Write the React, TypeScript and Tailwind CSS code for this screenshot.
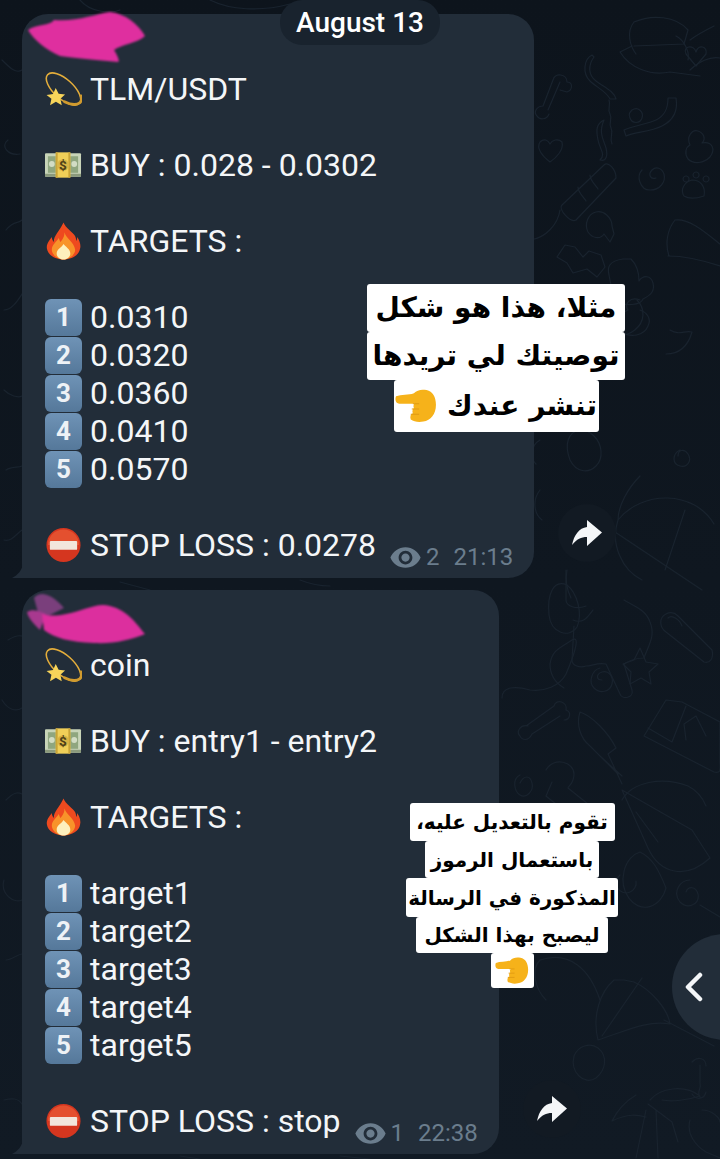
import { MdVisibility } from "react-icons/md";

const doodles = [
  // top right
  "M634 22c18-8 42-6 54 8 M634 22c-8 10-4 24 2 32 M688 30l-4 14-50 2 M620 52c10 16 30 24 50 20l30 4 M620 52l12-6",
  "M676 36c8 4 14 16 12 24 M690 40c8-6 16-10 24-14 M690 70c8-8 20-14 30-12",
  "M686 54c-4-8 8-10 10-2 2-8 12-6 10 2l-10 12z",
  "M594 57c-6 8-6 18 2 24 8 6 18 10 20 18h-6c-4-8-14-12-20-18-8-8-6-22 2-26z",
  "M609 100c2 6-2 8 1 14s-2 8 1 14-2 8 1 16",
  "M676 98c2 12-2 22-14 28-12 6-28 6-36 10l-2-6c8-4 24-6 32-10 8-4 12-10 12-22z",
  "M553 80l-10 26 M560 82l-12 28 M553 80c2-8 14-6 14 2 6 0 6 8 0 10l-7-2 M543 106c-6 0-10 6-6 10 2 4 10 4 12-2",
  "M550 162c-8-6-14-14-10-20 4-4 8-2 10 2 2-4 8-6 12-2 2 8-6 16-12 20z",
  "M604 165l-42 40 M616 178l-40 42 M604 165c4-4 12 4 12 13 M562 205c-4 4 8 18 14 15 M590 175c0 6 6 10 8 14 M578 187c0 6 6 10 8 14",
  "M560 210c-2 14-14 28-30 30",
  "M604 120c-8 4-8 10-6 20 2 10 8 14 2 20 6 2 8-4 6-12-2-8-8-14-2-28z",
  "M632 110c6-4 12 2 10 8s-10 6-12 0c-2-4 0-6 2-8z",
  "M642 170c-6 6-2 20 8 20s16-8 14-16c-2-6-8-8-12-4s-2 10 4 8",
  "M690 145c-4-8 2-16 8-14s8 8 4 12c10-2 14 6 8 14-6 6-16 8-22 2-4-6-2-12 2-14z",
  "M692 180c-8 2-12 10-8 16 6 4 14 2 20 0 2-10-4-16-12-16z M686 176a3 3 0 1 0 .1 0 M696 172a3 3 0 1 0 .1 0 M706 176a3 3 0 1 0 .1 0",
  "M596 212c-8 2-12 12-8 20 4 6 12 8 16 2l6 8 4-8-2-8c0-8-8-16-16-14z",
  "M675 220c-8 10-10 24-6 36 M675 220c14-2 30 12 45 24 M668 256c18 0 34 4 52 10",
  "M565 245l-8 12 10 6 6 10 14-4 10 8 8-10-4-12-12-4-6 6-8-10z",
  "M623 259c-14 2-16 8-14 16 2 14 6 20 6 26 10 6 26 4 28-2 8-4 12-8 10-16-2-8-10-8-14-2 0-10-2-16-8-22z",
  // right middle
  "M640 300c-10-4-16 4-12 10-10 4-12 14-6 22 8 6 22 4 26-6 4-8-2-14-8-16 M670 330c10 6 14 0 22 2-4 14-12 22-26 22",
  "M597 300a26 22 0 1 0 40 0",
  "M580 430c-12 2-16 14-10 30 6 12 18 14 26 6 8-8 6-22-2-30-4-4-10-6-14-6z",
  "M680 450c-8 4-8 14 0 16s12-6 8-12-10-4-10 2",
  "M618 520c24-30 76-30 96 4 M618 520c-8 24 4 50 24 60 M640 476c-12 12-22 30-22 44 M685 510l-20 60 M612 530l90 60",
  "M540 440c-10 6-10 18-4 24 M540 490c-8 10-6 24 2 30",
  // right lower
  "M567 585c-14-6-20 10-18 30 2 18 20 24 28 12 6-14 0-34-10-42z",
  "M567 570c-2 10 0 20 4 28 M573 620c10 4 14-2 20-10",
  "M566 570v30c0 6 10 10 20 6 M574 626l-2 34c0 6 8 8 14 6 6 0 12-4 20-2 M606 664l14 30c2 6 14 4 12-4l-8-26c6-4 12-6 20-6 4-12 12-22 6-36-4-12-16-16-26-22",
  "M666 614c-8 4-6 14 0 18l38 30c6 2 10-4 8-12l-34-34c-4-4-8-4-12-2z M668 618c4-4 12 2 14 8",
  "M640 648l-6 12-11 4 8 8-1 12 11-6 10 6-2-12 9-8-12-2z",
  "M572 640c10-6 0 20-6 34-6 12-22 18-36 16-14-4-28-4-28 8 M572 640c-12 8-20 10-22 24 0 10 4 18 14 24",
  "M600 668c-8 2-12 14-6 20s16 4 18-4-4-14-10-12-6 8 0 8",
  "M554 706l-28 20 M560 716l-28 18 M554 706c2-8 14-4 12 4 6 2 4 10-2 10 M528 726c-8-2-12 6-8 10 2 4 8 6 12-2",
  "M580 712c-4 12 0 26 10 34l28 28 M580 712c12 4 28 20 36 36 l-8 6 14 30 M600 756l22 20",
  "M666 700l-22 36 70 36c8 2 6-4 6-10v-40l-38-20z M648 728l24 14 14-36 M686 740l-2-16 12-8 10 20",
  "M520 775c-8 4-6 16 0 20s14-4 12-12-8-8-12 0",
  "M546 770c8-14 28-8 28 4 0 10-6 12-6 14l20 16 M552 782l-6 14 22 18",
  "M622 800c10-18 40-24 66-14 8 4 14 10 18 20",
  // pizza + lower right
  "M622 790l70 40 18 28c-24 22-50 16-62-10l-26-58z M636 812l22 30",
  "M640 852a22 28 0 1 0 26 36c-8-20-14-30-26-36z M620 875a10 10 0 1 0 16 6",
  "M690 880c-10 0-18 12-10 22 8 8 20 2 18-8-2-8-10-8-12-2 M700 905l20 12",
  "M560 880c-14 8-20 24-6 36 10 4 20 0 20-14 0-10-6-20-14-22z",
  "M540 960c30-10 50 10 60 40 M540 960c-10 10-4 30 6 40",
  "M614 980c-14 12-22 36-16 60 30-10 50-20 72-16 -2-14-18-34-36-42l-10-2z M602 1036l40-58 M664 1020l50 26",
  "M574 1056c4-10 16-14 24-8 10 8 8 22-2 30-12 8-26-6-22-22z",
  "M636 1095c-10 6-18 14-24 26 16-8 26-6 34-4 M650 1100c10-12 34-16 50-4-12 4-28 6-38 4 M646 1110l-10 48 M656 1110l2 48 M648 1104l24 18 6 20",
  "M700 1065v18c2 6-4 8 0 14 M692 1062c6-6 14-4 14 4 M692 1094c4 6 12 6 14-2",
  "M690 1120c-4 14 6 26 16 32l14 6 M702 1110c10 0 18 8 18 12",
  // left strip
  "M2 60c8 8 14 14 20 10 M8 140c-8 6 0 16 12 14 M6 230c8-10 12-6 16-10 M4 310c8 0 14-10 18-16 M4 390c6 6 14 8 18 6 M6 470c6-4 12-2 16-4 M4 540c8 2 12-6 18-10",
  "M8 640c10-6 12-4 14-4 M2 700c6 10 14 12 20 8 M6 800c8-8 12-8 16-6 M4 880c-4 14 10 24 18 20 M6 960c6 0 12-6 16-6 M4 1100c8-2 14-2 18 4",
  // bottom gap between bubbles
  "M120 582l30 8 M300 580c10 4 20 6 30 6 M180 1156l20 3 M340 1156l30 3 M80 0c10 12 30 14 40 10 M210 0c20 10 50 12 80 4",
];

const Scribble = ({ kind }: { kind: "a" | "b" }) => (
  <svg
    width="140"
    height="64"
    viewBox="0 0 140 64"
    className={`absolute left-[4px] blur-[1.2px] ${kind === "a" ? "top-[-2px]" : "top-0"}`}
  >
    {kind === "a" ? (
      <path
        d="M2 18C10 12 24 14 28 8 50 10 70 2 84 0 100 2 112 12 119 24 110 32 96 32 88 38 92 44 94 50 92 50 70 48 48 46 34 44 20 38 8 28 2 18Z"
        fill="#df2f9f"
      />
    ) : (
      <>
        <path d="M8 8C14 0 26 4 38 18L14 30Z" fill="#7a3f7c" />
        <path d="M1 22C8 18 14 22 20 24L14 40C8 34 2 28 1 22Z" fill="#a8398f" />
        <path d="M16 24C24 26 30 26 40 24 56 22 70 12 84 16 102 20 112 36 119 44 104 50 88 54 68 53 44 52 28 48 18 40Z" fill="#dc2f9e" />
      </>
    )}
  </svg>
);

const Dizzy = () => (
  <svg width="38" height="38" viewBox="0 0 38 38">
    <ellipse cx="19" cy="19" rx="22" ry="10" transform="rotate(42 19 19)" fill="none" stroke="#e3ad3b" strokeWidth="1.6" />
    <path d="M11 18l3 6 6.600 .6-4.800 4.400 1.400 6.600-6-3.400-6 3.400 1.400-6.600-5-3.800 6.700-1z" fill="#f7d45a" />
    <path d="M20 32c6 3 12 4 16 1 1-1 2-4 1-7" fill="none" stroke="#d09a2e" strokeWidth="2.8" strokeLinecap="round" />
  </svg>
);

const Money = () => (
  <svg width="38" height="38" viewBox="0 0 38 38">
    <rect x="0" y="7" width="37" height="24" rx="1" fill="#c8d4b8" />
    <rect x="0" y="28" width="37" height="3" fill="#8b9a7c" />
    <rect x="3" y="10" width="31" height="17" fill="#8fa67f" />
    <circle cx="7" cy="18" r="3" fill="#d2dcc4" />
    <circle cx="30" cy="18" r="3" fill="#d2dcc4" />
    <rect x="11" y="6" width="15" height="26" fill="#f0cf58" />
    <rect x="11" y="6" width="2" height="26" fill="#c9a437" />
    <rect x="24" y="6" width="2" height="26" fill="#c9a437" />
    <circle cx="18.500" cy="19" r="6" fill="#d8b445" />
    <text x="18.500" y="24" textAnchor="middle" fontSize="14" fontWeight="700" fill="#4d3f17" fontFamily="Roboto, sans-serif">$</text>
  </svg>
);

const Fire = () => (
  <svg width="38" height="38" viewBox="0 0 38 38">
    <path d="M19 0c2 6 10 10 12 14 1 2 1 4 1 5 1-1 1-3 1-4 3 4 4 9 3 12-1 6-8 11-17 11S3 33 2 27c-1-5 3-9 5-12 0 2 1 4 2 5 0-7 6-11 10-20z" fill="#ee4a1f" />
    <path d="M20 10c1 6 10 10 11 18 0 5-6 10-12 10S7 33 7 28c0-5 5-8 7-12 1 2 1 3 2 4 2-3 4-5 4-10z" fill="#f8932a" />
    <path d="M19 22c2 3 7 5 7 10 0 3-3 6-7 6s-7-3-7-6c0-5 5-6 7-10z" fill="#fdf0bd" />
  </svg>
);

const Keycap = ({ n }: { n: string }) => (
  <div className="w-[37px] h-[37px] rounded-[6px] bg-linear-to-b from-[#6f93b6] to-[#55789a] flex items-center justify-center text-[26px] font-bold text-[#eef2f6]">
    {n}
  </div>
);

const NoEntry = () => (
  <svg width="38" height="38" viewBox="0 0 38 38">
    <circle cx="19" cy="19" r="17.500" fill="#d5361f" />
    <path d="M3 19a16 16 0 0 1 32 0" fill="#e4502f" />
    <rect x="5" y="15" width="28" height="9" rx="1" fill="#f2e6dc" />
  </svg>
);

const Pointing = ({ size }: { size: number }) => (
  <svg width={size} height={size * 0.8} viewBox="0 0 40 32">
    <path d="M1 7C6 5 13 6 18 4c3-3 7-4 12-3 6 1 9 7 9 14 0 9-5 15-12 16-5 1-9 0-12-2-1-3 0-5 2-6-1-2 0-4 1-5-1-2 0-4 1-4H4C0 14 0 9 1 7z" fill="#f6b21a" />
    <path d="M15 24h8M16 19h7M17 14h6" stroke="#e09a12" strokeWidth="1" fill="none" />
  </svg>
);

const ShareButton = () => (
  <div className="self-end mb-[16px] ml-[24px] w-[58px] h-[58px] rounded-full bg-[#121a23] flex items-center justify-center">
    <svg width="30" height="26" viewBox="0 0 30 26">
      <path d="M30 12.500 15 0v7C7 8 2 15 0 25c5-6 9-8 15-8v9z" fill="#f4f6f8" />
    </svg>
  </div>
);

const Line = ({ icon, text }: { icon?: React.ReactNode; text?: string }) => (
  <div className="h-[38px] flex items-center gap-[8px]">
    {icon && <span className="w-[37px] flex justify-center">{icon}</span>}
    {text && <span>{text}</span>}
  </div>
);

const Message = ({ coin, buy, targets, stop, views, time, scribble }: {
  coin: string; buy: string; targets: string[]; stop: string; views: string; time: string; scribble: "a" | "b";
}) => (
  <div className="flex ml-[22px]">
    <div className="relative w-fit bg-[#222d39] rounded-[26px] rounded-bl-none pt-[56px] pl-[23px] pr-[21px] pb-[14px] text-[32px] leading-[38px] text-[#f4f6f8]">
      <Scribble kind={scribble} />
      <svg width="11" height="14" viewBox="0 0 11 14" className="absolute bottom-0 left-[-10px]">
        <path d="M11 0C10 6 6 11 0 14H11Z" fill="#222d39" />
      </svg>
      <Line icon={<Dizzy />} text={coin} />
      <Line />
      <Line icon={<Money />} text={buy} />
      <Line />
      <Line icon={<Fire />} text="TARGETS :" />
      <Line />
      {targets.map((t, i) => (
        <Line key={t} icon={<Keycap n={String(i + 1)} />} text={t} />
      ))}
      <Line />
      <div className="h-[38px] flex items-center">
        <span className="w-[37px] flex justify-center mr-[8px]"><NoEntry /></span>
        <span>{stop}</span>
        <span className="ml-[15px] mt-[24px] flex items-center text-[24px] leading-[28px] text-[#6b7d8d]">
          <MdVisibility size={33} className="mx-[-2px]" />
          <span className="ml-[6px]">{views}</span>
          <span className="ml-[14px]">{time}</span>
        </span>
      </div>
    </div>
    <ShareButton />
  </div>
);

const arabic = "absolute flex flex-col items-center text-black font-bold [font-family:'DejaVu_Sans',sans-serif]";

const CaptionLine = ({ children, className }: { children: React.ReactNode; className: string }) => (
  <div dir="rtl" className={`bg-white rounded-[3px] flex items-center justify-center whitespace-nowrap ${className}`}>
    {children}
  </div>
);

export default function App() {
  return (
    <div className="relative w-[720px] h-[1159px] overflow-hidden bg-linear-to-b from-[#0d141c] to-[#111a24] font-['Roboto',sans-serif]">
      <svg width="720" height="1159" viewBox="0 0 720 1159" className="absolute inset-0" fill="none" stroke="#19232e" strokeWidth="1.2" strokeLinecap="round" strokeLinejoin="round">
        {doodles.map((d, i) => (
          <path key={i} d={d} />
        ))}
      </svg>

      <div className="relative flex flex-col gap-[12px] pt-[14px]">
        <Message coin="TLM/USDT" buy="BUY : 0.028 - 0.0302" targets={["0.0310", "0.0320", "0.0360", "0.0410", "0.0570"]} stop="STOP LOSS : 0.0278" views="2" time="21:13" scribble="a" />
        <Message coin="coin" buy="BUY : entry1 - entry2" targets={["target1", "target2", "target3", "target4", "target5"]} stop="STOP LOSS : stop" views="1" time="22:38" scribble="b" />
      </div>

      <div className="absolute left-[280px] top-0 w-[160px] h-[45px] rounded-[22px] bg-[#19232e] flex items-center justify-center text-[28px] font-medium text-white">
        August 13
      </div>

      <div className={`${arabic} left-[367px] top-[284px] w-[258px] text-[28px]`}>
        <CaptionLine className="w-[258px] h-[48px]">مثلا، هذا هو شكل</CaptionLine>
        <CaptionLine className="w-[258px] h-[48px]">توصيتك لي تريدها</CaptionLine>
        <CaptionLine className="w-[205px] h-[52px] gap-[10px]">
          تنشر عندك
          <Pointing size={42} />
        </CaptionLine>
      </div>

      <div className={`${arabic} left-[406px] top-[803px] w-[212px] text-[20px]`}>
        <CaptionLine className="w-[205px] h-[38px]">تقوم بالتعديل عليه،</CaptionLine>
        <CaptionLine className="w-[174px] h-[37px]">باستعمال الرموز</CaptionLine>
        <CaptionLine className="w-[212px] h-[39px]">المذكورة في الرسالة</CaptionLine>
        <CaptionLine className="w-[192px] h-[36px]">ليصبح بهذا الشكل</CaptionLine>
        <CaptionLine className="w-[43px] h-[35px]">
          <Pointing size={34} />
        </CaptionLine>
      </div>

      <div className="absolute left-[672px] top-[934px] w-[106px] h-[106px] rounded-full bg-[#222d39] flex items-center pl-[13px]">
        <svg width="18" height="30" viewBox="0 0 18 30" fill="none" stroke="#f4f6f8" strokeWidth="4.5" strokeLinecap="round" strokeLinejoin="round">
          <path d="M15 3 3 15l12 12" />
        </svg>
      </div>
    </div>
  );
}
